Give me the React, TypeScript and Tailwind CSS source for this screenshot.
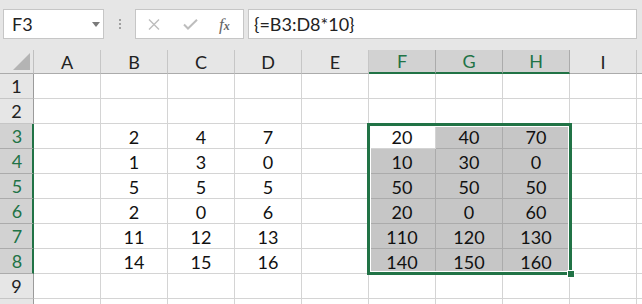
import React from "react";

const COLS = ["A", "B", "C", "D", "E", "F", "G", "H", "I", ""];
const SRC: number[][] = [
  [2, 4, 7],
  [1, 3, 0],
  [5, 5, 5],
  [2, 0, 6],
  [11, 12, 13],
  [14, 15, 16],
];

function cellValue(row: number, col: number): string {
  const r = row - 3;
  if (r < 0 || r >= SRC.length) return "";
  if (col >= 1 && col <= 3) return String(SRC[r][col - 1]);
  if (col >= 5 && col <= 7) return String(SRC[r][col - 5] * 10);
  return "";
}

function FormulaBar() {
  return (
    <div className="flex h-[50px] items-start bg-[#e6e6e6] pt-[9px] pl-[3px]">
      <div className="relative flex h-[30px] w-[101px] items-center border border-[#c6c6c6] bg-white pl-[8px] text-[18px] text-[#222]">
        F3
        <svg className="absolute left-[88px] top-[12px]" width="8" height="5" viewBox="0 0 8 5">
          <path d="M0 0H8L4 5Z" fill="#7a7a7a" />
        </svg>
      </div>
      <div className="flex h-[30px] w-[31px] flex-col items-center justify-center gap-[2px]">
        <span className="h-[2px] w-[2px] bg-[#a0a0a0]" />
        <span className="h-[2px] w-[2px] bg-[#a0a0a0]" />
        <span className="h-[2px] w-[2px] bg-[#a0a0a0]" />
      </div>
      <div className="flex h-[30px] w-[109px] items-center border border-[#c6c6c6] bg-white">
        <svg className="ml-[12px]" width="12" height="11" viewBox="0 0 12 11">
          <path d="M1 0.5L11 10.5M11 0.5L1 10.5" stroke="#bdbdbd" strokeWidth="1.4" />
        </svg>
        <svg className="ml-[23px]" width="15" height="11" viewBox="0 0 15 11">
          <path d="M1 5.5L5 9.5L14 0.8" stroke="#bdbdbd" strokeWidth="2" fill="none" />
        </svg>
        <span className="ml-[21px] font-['Liberation_Serif',serif] text-[17px] italic text-[#666]">
          f<span className="text-[12px] font-bold">x</span>
        </span>
      </div>
      <div className="ml-[4px] flex h-[30px] w-[389px] items-center border border-[#c6c6c6] bg-white pl-[5px] text-[18px] text-[#222]">
        {"{=B3:D8*10}"}
      </div>
    </div>
  );
}

function Sheet() {
  const rows = Array.from({ length: 10 }, (_, i) => i + 1);
  return (
    <div className="relative">
      <div className="grid grid-cols-[34px_repeat(10,67px)]">
        <div className="relative h-[24px] border-r border-b border-r-[#c0c0c0] border-b-[#ababab] bg-[#e6e6e6]">
          <svg className="absolute right-[3px] bottom-[3px]" width="17" height="17" viewBox="0 0 17 17">
            <path d="M17 0V17H0Z" fill="#b4b4b4" />
          </svg>
        </div>
        {COLS.map((c, i) => {
          const sel = i >= 5 && i <= 7;
          return (
            <div
              key={i}
              className={
                sel
                  ? "flex h-[24px] items-center justify-center border-r border-b-2 border-r-[#ababab] border-b-[#217346] bg-[#d2d2d2] text-[#217346]"
                  : "flex h-[24px] items-center justify-center border-r border-b border-r-[#c6c6c6] border-b-[#ababab] bg-[#e6e6e6] text-[#222]"
              }
            >
              {c}
            </div>
          );
        })}
        {rows.map((r) => (
          <React.Fragment key={r}>
            <div
              className={
                r >= 3 && r <= 8
                  ? "flex h-[25px] items-center justify-center border-r-2 border-b border-r-[#217346] border-b-[#ababab] bg-[#d2d2d2] pl-[2px] text-[#217346]"
                  : "flex h-[25px] items-center justify-center border-r border-b border-r-[#9b9b9b] border-b-[#c6c6c6] bg-[#e6e6e6] text-[#222]"
              }
            >
              {r < 10 ? r : ""}
            </div>
            {COLS.map((c, ci) => {
              const inSel = r >= 3 && r <= 8 && ci >= 5 && ci <= 7;
              const active = r === 3 && ci === 5;
              let cls = "flex h-[25px] items-center justify-center border-r border-b pt-[2px] text-[#111] ";
              if (active) cls += "border-[#d4d4d4] bg-white";
              else if (inSel) cls += "border-[#ababab] bg-[#c6c6c6]";
              else cls += "border-[#d4d4d4] bg-white";
              return (
                <div key={ci} className={cls}>
                  {cellValue(r, ci)}
                </div>
              );
            })}
          </React.Fragment>
        ))}
      </div>
      <div className="absolute left-[367px] top-[73px] h-[152px] w-[205px] border-[3px] border-[#217346] shadow-[inset_0_0_0_1px_white]" />
      <div className="absolute left-[567px] top-[220px] h-[8px] w-[8px] border border-white bg-[#217346]" />
    </div>
  );
}

export default function App() {
  return (
    <div className="h-[304px] w-[642px] overflow-hidden bg-white font-['Lato',sans-serif] text-[18px] leading-none">
      <FormulaBar />
      <Sheet />
    </div>
  );
}
